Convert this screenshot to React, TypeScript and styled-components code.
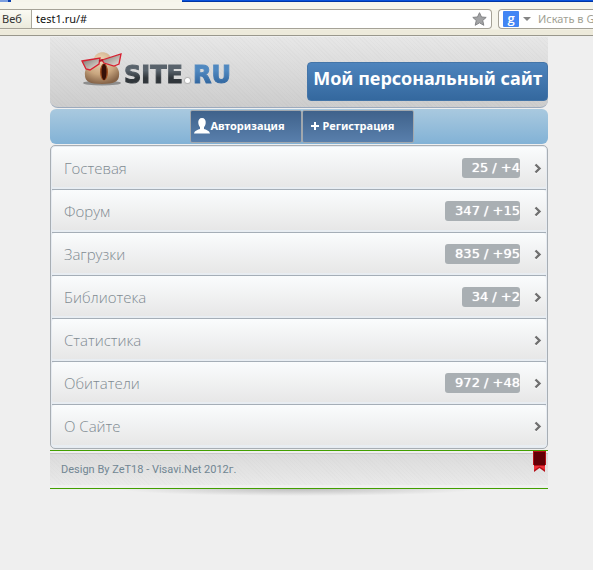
import React from "react";
import styled, { createGlobalStyle } from "styled-components";

const Global = createGlobalStyle`
  * { box-sizing: border-box; }
  body { margin: 0; background: #efefef; font-family: "Noto Sans", "Open Sans", sans-serif; }
  a { text-decoration: none; }
  svg { display: block; flex: none; }
`;

const Chrome = styled.header`
  background: #f5f4ea;
  border-bottom: 1px solid #99978c;
`;
const TabStrip = styled.div`
  display: flex;
  justify-content: space-between;
  height: 2px;
`;
const BackTab = styled.div`
  width: 11px;
  background: #7b9ee0;
  border-right: 3px solid #0a3fae;
`;
const TabSpace = styled.div`
  width: calc(100% - 182px);
  background: #0a52dc;
  border-bottom: 1px solid #0036a4;
`;
const Toolbar = styled.div`
  display: flex;
  gap: 6px;
  height: 33px;
  padding: 7px 0 6px;
  background: linear-gradient(#f6f5ec 0 27px, #edeadb 28px);
`;
const AddressBar = styled.form`
  display: flex;
  align-items: center;
  flex: 1;
  height: 20px;
  background: #fff;
  border: 1px solid #a5a297;
  border-left: 0;
  border-radius: 0 4px 4px 0;
`;
const Identity = styled.button`
  width: 32px;
  height: 18px;
  padding: 0 0 0 2px;
  border: 0;
  border-right: 1px solid #aaa89d;
  background: linear-gradient(#fafaf3, #ebeadc);
  color: #333;
  font: 11px/18px "Noto Sans", sans-serif;
  text-align: left;
`;
const AddressInput = styled.input`
  flex: 1;
  min-width: 0;
  padding: 0 4px;
  border: 0;
  outline: 0;
  background: transparent;
  color: #111;
  font: 11px/16px "Noto Sans", sans-serif;
`;
const IconButton = styled.button`
  display: flex;
  align-items: center;
  padding: 0 4px;
  border: 0;
  background: transparent;
`;
const SearchBox = styled.form`
  display: flex;
  align-items: center;
  width: 95px;
  height: 20px;
  overflow: hidden;
  background: #fff;
  border: 1px solid #a5a297;
  border-right: 0;
  border-radius: 4px 0 0 4px;
`;
const Engine = styled.button`
  display: flex;
  align-items: center;
  gap: 4px;
  padding: 0 3px 0 4px;
  border: 0;
  background: transparent;
`;
const EngineLogo = styled.span`
  width: 16px;
  height: 16px;
  border-radius: 1px;
  background: #4285f4;
  color: #fff;
  font: 600 13px/14px "Open Sans", sans-serif;
  text-align: center;
`;
const SearchInput = styled.input`
  flex: none;
  width: 100px;
  padding: 0 4px;
  border: 0;
  outline: 0;
  font: 11px/16px "Noto Sans", sans-serif;
  &::placeholder { color: #a19f93; opacity: 1; }
`;

const Page = styled.main`
  padding: 1px 45px 0 50px;
`;
const Banner = styled.div`
  display: flex;
  align-items: flex-start;
  justify-content: space-between;
  height: 71px;
  border-bottom: 1px solid #9caabd;
  border-radius: 0 0 8px 8px;
  background:
    repeating-linear-gradient(45deg, rgba(0, 0, 0, 0.015) 0 1px, transparent 1px 3px),
    linear-gradient(#e7e7e7, #cdcdcd);
`;
const Logo = styled.a`
  display: flex;
  align-items: flex-start;
  padding: 15px 0 0 31px;
`;
const Wordmark = styled.span`
  display: flex;
  padding: 8px 0 0 1px;
  font: bold 24px/30px "DejaVu Sans", sans-serif;
  -webkit-text-stroke: 1px transparent;
`;
const LogoName = styled.span`
  color: transparent;
  background: linear-gradient(#59636c 35%, #30363b 60%);
  background-clip: text;
`;
const LogoDot = styled.span`
  align-self: flex-end;
  width: 5px;
  height: 5px;
  margin: 0 3px 7px 2px;
  border-radius: 50%;
  background: #fff;
  box-shadow: 0 0 1px 1px #b4b4b4;
`;
const LogoZone = styled.span`
  color: transparent;
  background: linear-gradient(#4f88c0 35%, #3469a2 75%);
  background-clip: text;
`;
const Title = styled.h1`
  margin: 25px 0 0;
  padding: 0 5px;
  height: 39px;
  border: 1px solid #4475a8;
  border-radius: 4px;
  background: linear-gradient(#4e84bd, #34689e);
  color: #fff;
  font: bold 18px/31px "Noto Sans", sans-serif;
  white-space: nowrap;
`;
const Nav = styled.nav`
  display: flex;
  justify-content: center;
  height: 35px;
  margin-top: 1px;
  padding: 1px 0 0 5px;
  border-radius: 6px;
  background: linear-gradient(#a9c9df, #82b2d6);
`;
const NavLink = styled.a`
  display: flex;
  align-items: center;
  width: 112px;
  height: 33px;
  padding: 0 0 1px 3px;
  border: 1px solid #a1a8ae;
  border-radius: 2px;
  background: linear-gradient(#3f628b, #597fac);
  color: #fff;
  font: bold 11px/16px "Noto Sans", sans-serif;
`;
const Menu = styled.ul`
  list-style: none;
  margin: 1px 0 0;
  padding: 1px;
  border: 1px solid #a8aeb4;
  border-radius: 5px;
  background: #e6ebf1;
`;
const Item = styled.li`
  & + & { border-top: 1px solid #a5aeb7; }
`;
const ItemLink = styled.a`
  display: flex;
  align-items: center;
  height: 42px;
  padding: 2px 4px 0 12px;
  border-bottom: 2px solid #e8edf2;
  border-radius: 3px;
  background: linear-gradient(#fafcfd, #e7e7e7);
  color: #7f8a91;
`;
const Label = styled.span`
  flex: 1;
  font: 300 15px/20px "Open Sans", "Noto Sans", sans-serif;
`;
const Counter = styled.span`
  height: 20px;
  margin-right: 14px;
  padding-left: 10px;
  border-radius: 3px;
  background: #a9afb3;
  color: #fff;
  font: 13px/20px "DejaVu Sans", sans-serif;
  text-shadow: 0 0 1px #fff;
`;
const Footer = styled.footer`
  display: flex;
  align-items: flex-start;
  justify-content: space-between;
  height: 39px;
  margin-top: 1px;
  padding: 0 2px 0 11px;
  border-top: 1px solid #429f00;
  border-bottom: 1px solid #429f00;
  background:
    linear-gradient(#efefef 0 2px, #c8c8c8 2px 3px, transparent 3px 34px, #efefef 34px),
    repeating-linear-gradient(45deg, rgba(0, 0, 0, 0.01) 0 1px, transparent 1px 3px),
    linear-gradient(#dadada, #ebebeb);
`;
const Credit = styled.p`
  margin: 11px 0 0;
  color: #718693;
  font: 11px/16px Roboto, sans-serif;
`;
const Shade = styled.div`
  height: 7px;
  background: radial-gradient(ellipse 36% 100% at 50% 0, #bebebe, #efefef);
`;

const Mascot = () => (
  <svg width="42" height="34" viewBox="0 0 42 34" aria-hidden="true">
    <defs>
      <radialGradient id="skin" cx="45%" cy="25%" r="75%">
        <stop offset="0" stopColor="#efd8b9" />
        <stop offset=".6" stopColor="#c9a67f" />
        <stop offset="1" stopColor="#866448" />
      </radialGradient>
      <linearGradient id="lens" x2="1" y2="1">
        <stop offset="0" stopColor="#77716d" />
        <stop offset="1" stopColor="#f0e7de" />
      </linearGradient>
    </defs>
    <ellipse cx="21" cy="31" rx="19" ry="2.500" fill="#8e8e8e" />
    <path d="M13 7C14-2 29-2 30 7C30 12 37 13 38 20C39 30 34 32 21 32C8 32 3 30 4 20C5 13 13 13 13 7Z" fill="url(#skin)" />
    <ellipse cx="23" cy="20" rx="4" ry="8.500" fill="#9e4e21" />
    <ellipse cx="23" cy="20" rx="2.500" ry="8" fill="#351008" />
    <path d="M1 9L19 6L18 12L9 18L5 17Z" fill="url(#lens)" stroke="#d72031" strokeWidth="1.300" />
    <path d="M21 8L40 2L38 12L33 14L23 11Z" fill="url(#lens)" stroke="#d72031" strokeWidth="1.300" />
    <path d="M18 9L22 8" stroke="#b81828" strokeWidth="2" />
  </svg>
);
const Star = () => (
  <svg width="15" height="14" viewBox="0 0 15 14" aria-hidden="true">
    <path d="M7.500.7L9.500 5L14.200 5.400L10.700 8.500L11.800 13.300L7.500 10.800L3.200 13.300L4.300 8.500L.8 5.400L5.500 5Z" fill="#a2a3a5" stroke="#828385" />
  </svg>
);
const Arrow = () => (
  <svg width="8" height="5" viewBox="0 0 8 5" aria-hidden="true"><path d="M0 0H8L4 4Z" fill="#858585" /></svg>
);
const Person = () => (
  <svg width="17" height="16" viewBox="0 0 17 16" aria-hidden="true">
    <path d="M8 0C10.600 0 12 2 11.700 5C11.500 7.500 10.500 8.500 10 9.200V11C12 11.800 15.300 12.400 16 15.500H0C.7 12.400 4 11.800 6 11V9.200C5.500 8.500 4.500 7.500 4.300 5C4 2 5.400 0 8 0Z" fill="#fff" />
  </svg>
);
const Plus = () => (
  <svg width="17" height="16" viewBox="0 0 17 16" aria-hidden="true">
    <path d="M9 4V12M5 8H13" stroke="#fff" strokeWidth="2" />
  </svg>
);
const Chevron = () => (
  <svg width="8" height="11" viewBox="0 0 8 11" aria-hidden="true">
    <path d="M1.500 2.500L5.500 6.500L1.500 10.500" fill="none" stroke="#fff" strokeWidth="2" />
    <path d="M1.500 1.500L5.500 5.500L1.500 9.500" fill="none" stroke="#707070" strokeWidth="2.400" />
  </svg>
);
const Ribbon = () => (
  <svg width="13" height="22" viewBox="0 0 13 22" aria-hidden="true">
    <path d="M0 0H13V14H12V21L6.500 17L1 21V14H0Z" fill="#b60f18" />
    <path d="M1 1H12V14H1Z" fill="#620006" />
    <path d="M1 15H12V19L6.500 15.500L1 19Z" fill="#ee3038" />
  </svg>
);

const items: { label: string; count?: string }[] = [
  { label: "Гостевая", count: "25 / +4" },
  { label: "Форум", count: "347 / +15" },
  { label: "Загрузки", count: "835 / +95" },
  { label: "Библиотека", count: "34 / +2" },
  { label: "Статистика" },
  { label: "Обитатели", count: "972 / +48" },
  { label: "О Сайте" },
];

export default function App() {
  return (
    <>
      <Global />
      <Chrome>
        <TabStrip><BackTab /><TabSpace /></TabStrip>
        <Toolbar>
          <AddressBar>
            <Identity type="button">Веб</Identity>
            <AddressInput aria-label="Адрес" defaultValue="test1.ru/#" />
            <IconButton type="button" aria-label="Закладка"><Star /></IconButton>
          </AddressBar>
          <SearchBox>
            <Engine type="button" aria-label="Google"><EngineLogo>g</EngineLogo><Arrow /></Engine>
            <SearchInput aria-label="Поиск" placeholder="Искать в Google" />
          </SearchBox>
        </Toolbar>
      </Chrome>
      <Page>
        <Banner>
          <Logo href="#">
            <Mascot />
            <Wordmark><LogoName>SITE</LogoName><LogoDot /><LogoZone>RU</LogoZone></Wordmark>
          </Logo>
          <Title>Мой персональный сайт</Title>
        </Banner>
        <Nav>
          <NavLink href="#"><Person />Авторизация</NavLink>
          <NavLink href="#"><Plus />Регистрация</NavLink>
        </Nav>
        <Menu>
          {items.map(({ label, count }) => (
            <Item key={label}>
              <ItemLink href="#">
                <Label>{label}</Label>
                {count && <Counter>{count}</Counter>}
                <Chevron />
              </ItemLink>
            </Item>
          ))}
        </Menu>
        <Footer>
          <Credit>Design By ZeT18 - Visavi.Net 2012г.</Credit>
          <Ribbon />
        </Footer>
        <Shade />
      </Page>
    </>
  );
}
